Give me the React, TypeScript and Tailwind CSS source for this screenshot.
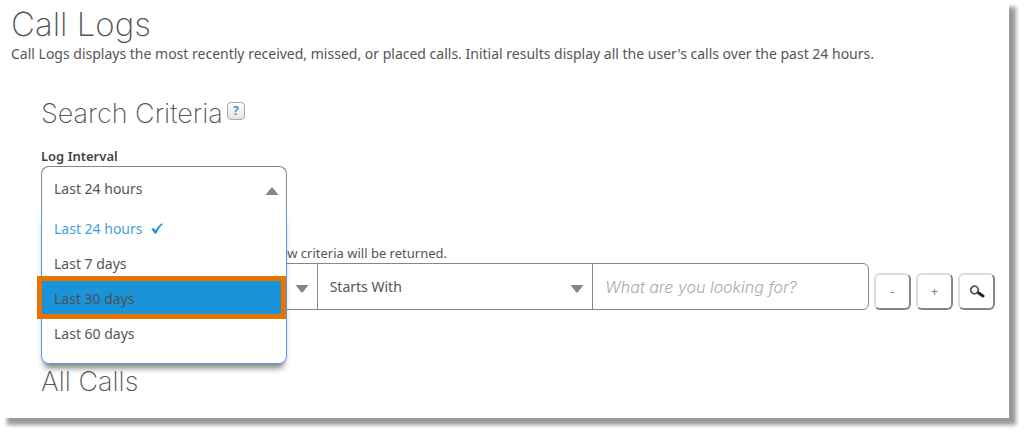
import type { ReactNode } from "react";

const intervals = ["Last 24 hours", "Last 7 days", "Last 30 days", "Last 60 days"];

function Arrow({ up = false }: { up?: boolean }) {
  return (
    <svg
      viewBox="0 0 14 8"
      className="pointer-events-none absolute top-5 right-2 mt-px h-2 w-3.5 fill-[#868686]"
      aria-hidden="true"
    >
      {up ? <path d="M0.5 8 L6 1 Q7 0 8 1 L13.5 8Z" /> : <path d="M0.5 0 L6 7 Q7 8 8 7 L13.5 0Z" />}
    </svg>
  );
}

function ToolButton({ label, children }: { label: string; children: ReactNode }) {
  return (
    <button
      type="button"
      aria-label={label}
      className="flex h-[37px] w-[37px] shrink-0 items-center justify-center rounded-md border-2 border-t-[#dcdcdc] border-r-[#858585] border-b-[#858585] border-l-[#dcdcdc] bg-white text-xs text-[#777]"
    >
      {children}
    </button>
  );
}

function IntervalSelect() {
  return (
    <div className="w-[246px]">
      <label htmlFor="interval" className="block text-[13px] leading-5 font-semibold text-[#444]">
        Log Interval
      </label>
      <div className="relative">
        <select
          id="interval"
          defaultValue="Last 24 hours"
          className="block h-[45px] w-full appearance-none rounded-t-lg border border-b-0 border-[#868686] bg-white px-3 text-sm text-[#555]"
        >
          {intervals.map((item) => (
            <option key={item}>{item}</option>
          ))}
        </select>
        <Arrow up />

        <ul
          role="listbox"
          aria-label="Log Interval"
          className="absolute top-full left-0 z-10 w-full rounded-b-lg border border-t-0 border-[#5b93f0] bg-white pb-3 text-sm leading-[35px] text-[#555] shadow-[0_7px_6px_-3px_rgba(0,0,0,0.5)]"
        >
          <li role="option" aria-selected="true" className="flex items-center gap-2 px-3 text-[#3f9fe0]">
            Last 24 hours
            <svg viewBox="0 0 12 11" className="h-[11px] w-3 fill-[#1a93d9]" aria-hidden="true">
              <path d="M0.3 6.2 L2.4 4.7 L4.4 7.3 Q7.2 2.4 11 0.3 L11.8 1 Q7.8 4.6 5 10.8 H3.8 Q2.4 8 0.3 6.2Z" />
            </svg>
          </li>
          <li role="option" aria-selected="false" className="px-3">
            Last 7 days
          </li>
          <li role="option" aria-selected="false" className="relative bg-[#1a93d9] px-3 text-[#4a5358]">
            Last 30 days
            <span className="absolute -top-[5px] right-0 -bottom-[3px] -left-[5px] border-5 border-[#e87400]" />
          </li>
          <li role="option" aria-selected="false" className="px-3">
            Last 60 days
          </li>
        </ul>
      </div>
    </div>
  );
}

function SearchRow() {
  return (
    <div className="flex items-end gap-[5px]">
      <div className="flex h-[47px] flex-1 divide-x divide-[#868686] rounded-md border border-[#868686]">
        <div className="relative flex-1">
          <select aria-label="Field" className="h-full w-full appearance-none px-3 text-sm text-[#555]">
            <option></option>
            <option>Name</option>
            <option>Number</option>
          </select>
          <Arrow />
        </div>
        <div className="relative flex-1">
          <select aria-label="Condition" className="h-full w-full appearance-none px-3 text-sm text-[#555]">
            <option>Starts With</option>
            <option>Contains</option>
            <option>Equal To</option>
          </select>
          <Arrow />
        </div>
        <div className="flex-1">
          <input
            type="text"
            aria-label="Search value"
            placeholder="What are you looking for?"
            className="h-full w-full px-3 font-['Inter',sans-serif] text-base font-light placeholder:text-[#aaa] placeholder:italic"
          />
        </div>
      </div>
      <ToolButton label="Remove criteria">-</ToolButton>
      <ToolButton label="Add criteria">+</ToolButton>
      <ToolButton label="Search">
        <svg viewBox="0 0 16 14" className="h-3.5 w-4" fill="none" aria-hidden="true">
          <circle cx="5.5" cy="5" r="3.8" stroke="#555" strokeWidth="1.8" />
          <path d="M8.5 7.2 L10 8.3" stroke="#444" strokeWidth="1.5" />
          <path d="M10 8.2 L14 11" stroke="#222" strokeWidth="3" strokeLinecap="round" />
        </svg>
      </ToolButton>
    </div>
  );
}

export default function App() {
  return (
    <div className="bg-white pr-[15px] pb-[15px] font-['Noto_Sans','Open_Sans',sans-serif] text-[#555]">
      <main className="bg-white pt-1 pr-3.5 pb-[18px] pl-[11px] shadow-[7px_7px_4px_#999]">
        <h1 className="font-['Inter',sans-serif] text-[33px] leading-10 font-extralight">Call Logs</h1>
        <p className="text-sm leading-5">
          Call Logs displays the most recently received, missed, or placed calls. Initial results display all the
          user's calls over the past 24 hours.
        </p>

        <section className="pt-8 pl-[30px]">
          <div className="flex items-start">
            <h2 className="font-['Inter',sans-serif] text-[27px] leading-9 font-extralight">Search Criteria</h2>
            <button
              type="button"
              aria-label="Help"
              className="mt-1.5 ml-1 flex h-[18px] w-[18px] items-center justify-center rounded border border-[#aaa] bg-linear-to-b from-white to-[#e4e4e4] text-xs leading-none font-bold text-[#3d9be0]"
            >
              ?
            </button>
          </div>

          <div className="pt-3.5">
            <IntervalSelect />
          </div>

          <p className="w-[406px] pt-8 text-right text-[13px] leading-5">below criteria will be returned.</p>
          <SearchRow />

          <h2 className="pt-[54px] font-['Inter',sans-serif] text-[27px] leading-9 font-extralight">All Calls</h2>
        </section>
      </main>
    </div>
  );
}
